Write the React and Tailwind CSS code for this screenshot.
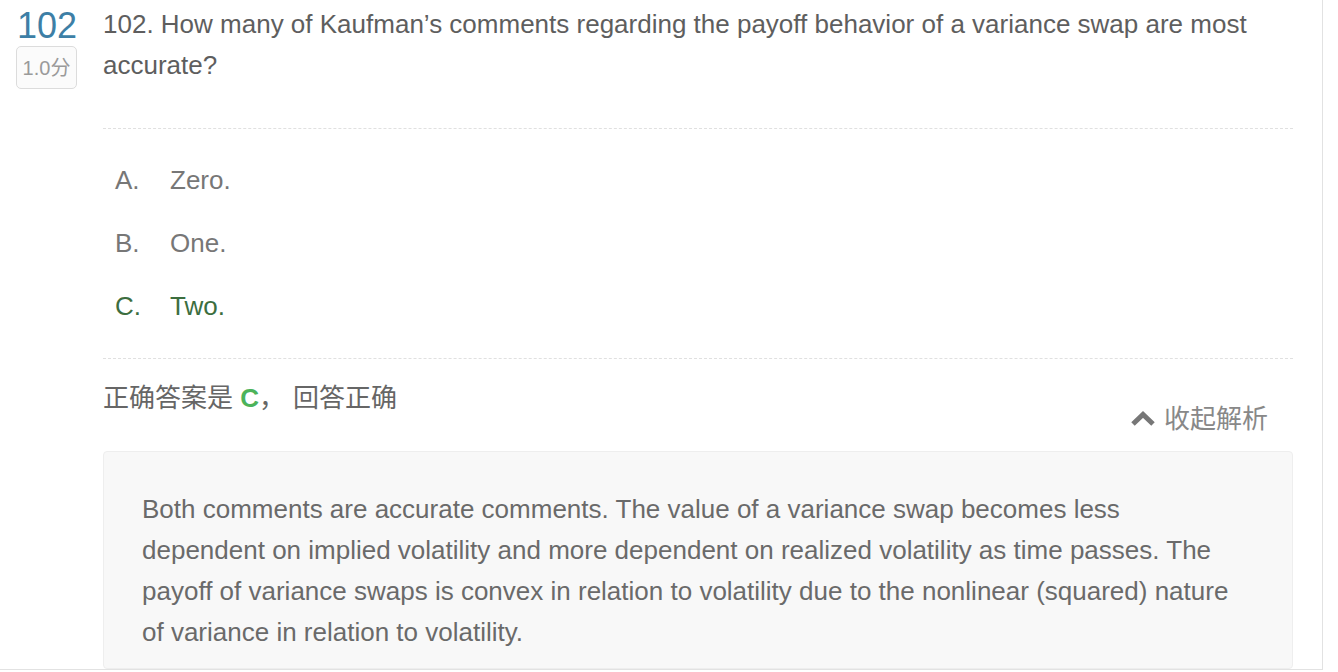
import React from "react";

const options = [
    { key: "A", text: "Zero." },
    { key: "B", text: "One." },
    { key: "C", text: "Two.", correct: true },
];

function App() {
    return (
        <div
            className="w-[1338px] h-[672px] bg-white overflow-hidden"
            style={{ fontFamily: '"Liberation Sans", Arial, "Noto Sans CJK SC", sans-serif' }}
        >
            <div className="w-[1323px] h-[670px] border-r border-b border-[#e2e2e2] flex">
                {/* 题号 */}
                <div className="w-[94px] pl-[16px] flex flex-col items-start">
                    <div className="w-[62px] text-center text-[36px] leading-[44px] text-[#3d7fa6] mt-[4px]">
                        102
                    </div>
                    <div className="mt-[-2px] w-[61px] h-[43px] border border-[#dcdcdc] rounded-[5px] bg-[#fbfbfb] flex items-center justify-center text-[20px] text-[#9a9a9a]">
                        1.0分
                    </div>
                </div>

                {/* 题目内容 */}
                <div className="w-[1190px] ml-[9px] flex flex-col">
                    <p className="mt-[4px] text-[26px] leading-[41px] text-[#5e5e5e]">
                        102. How many of Kaufman’s comments regarding the payoff behavior of a variance swap are most accurate?
                    </p>

                    <div className="mt-[42px] border-t border-dashed border-[#e0e0e0]" />

                    <div className="pt-[20px] pb-[20px]">
                        {options.map((opt) => (
                            <div
                                key={opt.key}
                                className={`flex items-center h-[63px] pl-[12px] text-[26px] ${
                                    opt.correct ? "text-[#3c6e3f]" : "text-[#777]"
                                }`}
                            >
                                <span className="w-[55px]">{opt.key}.</span>
                                <span>{opt.text}</span>
                            </div>
                        ))}
                    </div>

                    <div className="border-t border-dashed border-[#e0e0e0]" />

                    <div className="mt-[20px] text-[26px] leading-[38px] text-[#666]">
                        正确答案是 <span className="font-bold text-[#4cb35a]">C</span>，
                        <span className="ml-[8px]">回答正确</span>
                    </div>

                    <div className="flex justify-end items-center pr-[25px] mt-[-18px] h-[40px] text-[26px] text-[#888]">
                        <svg width="24" height="16" viewBox="0 0 24 16" className="mr-[9px]">
                            <path d="M2 13 L12 3.5 L22 13" fill="none" stroke="#777" strokeWidth="5" />
                        </svg>
                        收起解析
                    </div>

                    <div className="mt-[12px] flex-1 bg-[#f8f8f8] border border-[#eeeeee] rounded-[4px] pl-[38px] pr-[45px] pt-[37px]">
                        <p className="text-[26px] leading-[41px] text-[#6a6a6a]">
                            Both comments are accurate comments. The value of a variance swap becomes less dependent on implied volatility and more dependent on realized volatility as time passes. The payoff of variance swaps is convex in relation to volatility due to the nonlinear (squared) nature of variance in relation to volatility.
                        </p>
                    </div>
                </div>
            </div>
        </div>
    );
}

export default App;
